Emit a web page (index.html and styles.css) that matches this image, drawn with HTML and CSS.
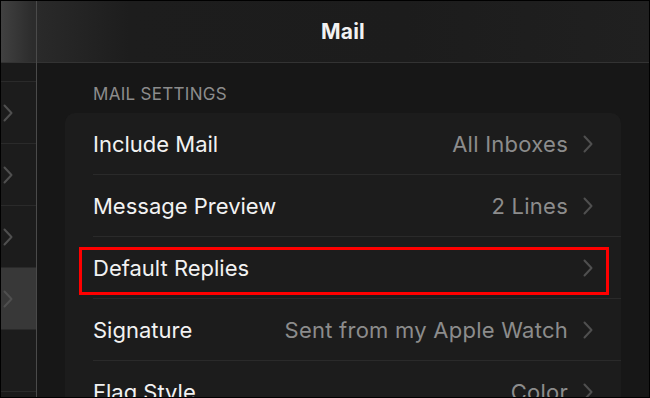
FILE: index.html
```html
<!DOCTYPE html>
<html lang="en">
<head>
    <meta charset="UTF-8">
    <title>Mail</title>
    <link rel="stylesheet" href="styles.css">
</head>
<body>
<div class="frame">
    <div class="sidebar">
        <div class="side-header"></div>
        <div class="side-top"></div>
        <div class="side-row"><svg class="chev" viewBox="0 0 10 18"><polyline points="1.5,1.5 8.5,9 1.5,16.5"/></svg></div>
        <div class="side-row"><svg class="chev" viewBox="0 0 10 18"><polyline points="1.5,1.5 8.5,9 1.5,16.5"/></svg></div>
        <div class="side-row"><svg class="chev" viewBox="0 0 10 18"><polyline points="1.5,1.5 8.5,9 1.5,16.5"/></svg></div>
        <div class="side-row selected"><svg class="chev" viewBox="0 0 10 18"><polyline points="1.5,1.5 8.5,9 1.5,16.5"/></svg></div>
        <div class="side-row"></div>
    </div>
    <div class="main">
        <div class="header"><h1>Mail</h1></div>
        <div class="section-title">MAIL SETTINGS</div>
        <div class="card">
            <div class="row">
                <div class="row-body">
                    <span class="label">Include Mail</span>
                    <span class="value">All Inboxes</span>
                    <svg class="chev" viewBox="0 0 10 18"><polyline points="1.5,1.5 8.5,9 1.5,16.5"/></svg>
                </div>
            </div>
            <div class="row">
                <div class="row-body">
                    <span class="label">Message Preview</span>
                    <span class="value">2 Lines</span>
                    <svg class="chev" viewBox="0 0 10 18"><polyline points="1.5,1.5 8.5,9 1.5,16.5"/></svg>
                </div>
            </div>
            <div class="row">
                <div class="row-body">
                    <span class="label">Default Replies</span>
                    <span class="value"></span>
                    <svg class="chev" viewBox="0 0 10 18"><polyline points="1.5,1.5 8.5,9 1.5,16.5"/></svg>
                </div>
                <div class="highlight"></div>
            </div>
            <div class="row">
                <div class="row-body">
                    <span class="label">Signature</span>
                    <span class="value">Sent from my Apple Watch</span>
                    <svg class="chev" viewBox="0 0 10 18"><polyline points="1.5,1.5 8.5,9 1.5,16.5"/></svg>
                </div>
            </div>
            <div class="row">
                <div class="row-body">
                    <span class="label">Flag Style</span>
                    <span class="value">Color</span>
                    <svg class="chev" viewBox="0 0 10 18"><polyline points="1.5,1.5 8.5,9 1.5,16.5"/></svg>
                </div>
            </div>
        </div>
    </div>
</div>
</body>
</html>
```

FILE: styles.css
```css
:root {
    --bg: #171717; --card-bg: #1c1c1c; --line: #2a2a2a;
    --text: #f2f2f2; --muted: #8c8c8c; --chev: #4f4f4f;
    --font: "Inter", "Roboto", sans-serif;
}
html, body { margin: 0; background: #000; }
body { font-family: var(--font); color: var(--text); }
.frame {
    width: 650px; height: 398px; box-sizing: border-box; border: 1px solid #000;
    display: flex; overflow: hidden; background: var(--bg);
}
.sidebar { width: 35px; flex: none; border-right: 1px solid #4a4a4a; background: #1a1a1a; }
.sidebar > div { flex: none; }
.side-header {
    height: 61px; border-bottom: 1px solid #333;
    background: linear-gradient(90deg, #414141, #2c2c2c 90%);
}
.side-top { height: 18px; border-bottom: 1px solid var(--line); }
.side-row {
    height: 61px; border-bottom: 1px solid var(--line); background: var(--card-bg);
    display: flex; align-items: center; padding-left: 2px;
}
.side-row.selected { background: #383838; }
.chev { width: 10px; height: 18px; flex: none; }
.chev polyline { fill: none; stroke: var(--chev); stroke-width: 2; stroke-linecap: round; stroke-linejoin: round; }
.main { flex: 1; display: flex; flex-direction: column; min-width: 0; }
.main > div { flex: none; }
.header {
    height: 61px; border-bottom: 1px solid #333; display: flex; align-items: center; justify-content: center;
    background: linear-gradient(90deg, #2a2a2a, #1d1d1d 15%, #1c1c1c 60%, #202020);
}
.header h1 { margin: 0; font-size: 21px; font-weight: 700; letter-spacing: 0.2px; }
.section-title {
    padding: 21px 0 0 56px; height: 29px; font-size: 17px; color: var(--muted); letter-spacing: 0.3px;
}
.card { margin: 0 28px; background: var(--card-bg); border-radius: 10px 10px 0 0; }
.row { position: relative; padding-left: 28px; }
.row-body {
    height: 61px; border-bottom: 1px solid var(--line); padding-right: 28px;
    display: flex; align-items: center;
}
.label { flex: 1; font-size: 22px; }
.value { font-size: 22px; color: var(--muted); margin-right: 15px; letter-spacing: 0.25px; }
.highlight {
    position: absolute; top: 10px; left: 14px; right: 12px; height: 48px;
    border: 3px solid #ff0000; box-sizing: border-box;
}
```
